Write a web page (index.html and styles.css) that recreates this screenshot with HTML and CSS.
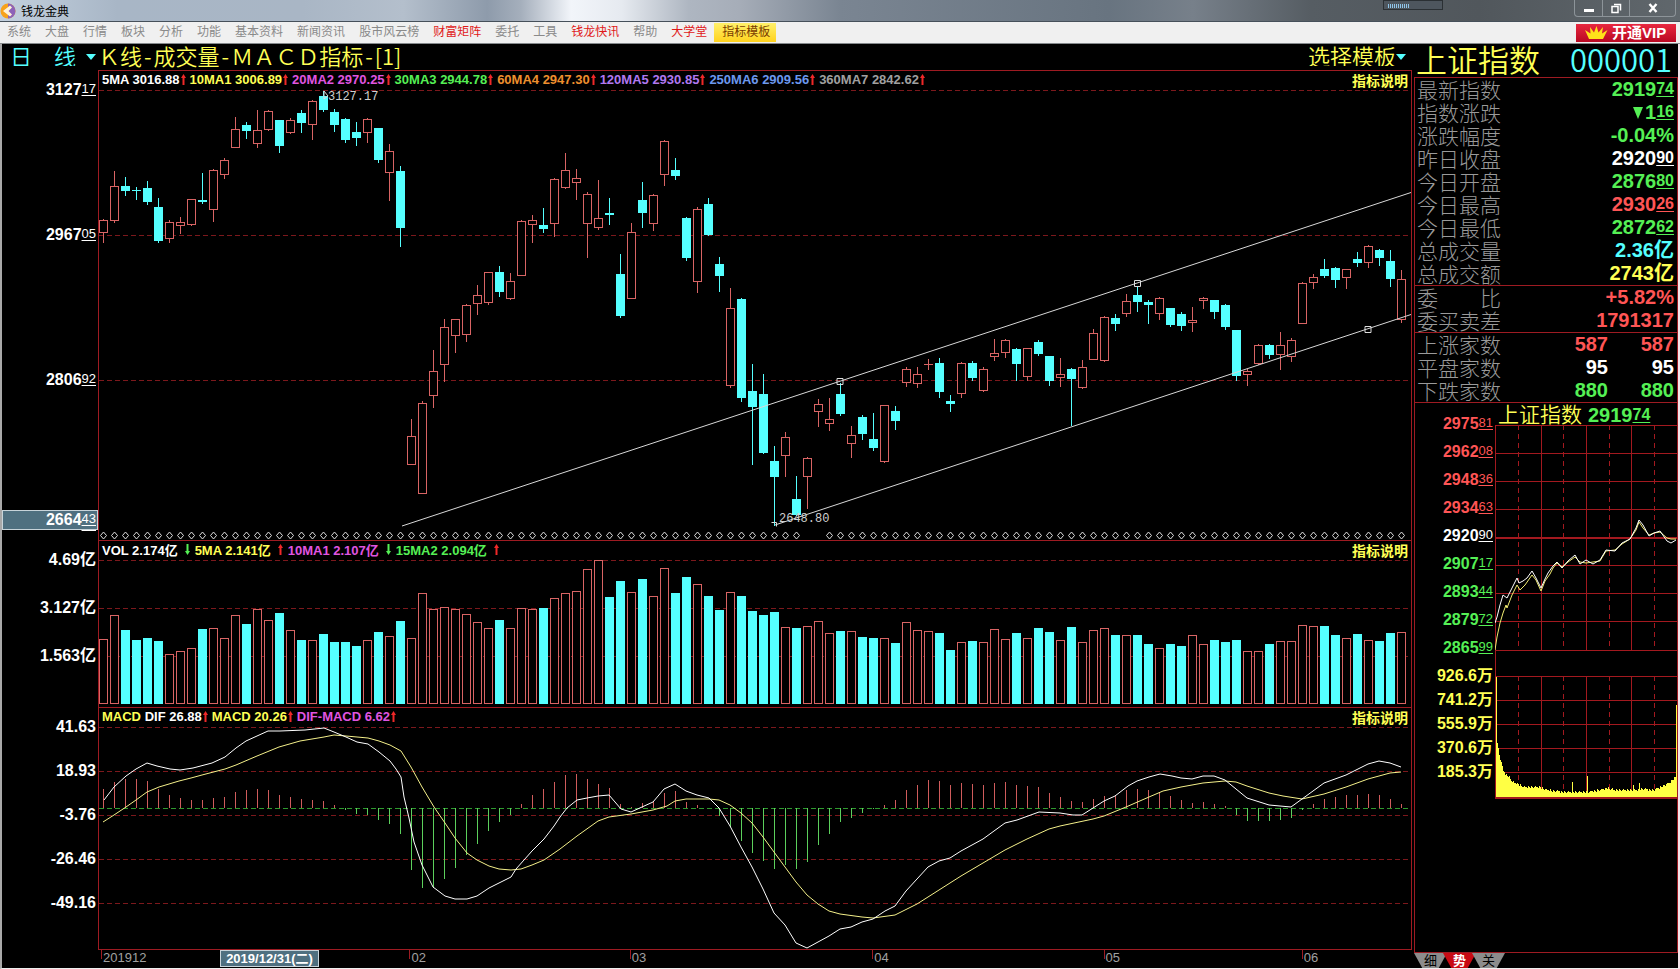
FILE: index.html
```html
<!DOCTYPE html>
<html lang="zh-CN">
	<head>
		<meta charset="utf-8">
		<title>钱龙金典</title>
		<link rel="stylesheet" href="styles.css">
	</head>
	<body>
		<svg class="defs" aria-hidden="true">
			<symbol id="arrow-up" viewBox="0 0 5 11">
				<path d="M2.5 0L5 4H3.5V11H1.5V4H0z" fill="currentColor"/>
			</symbol>
			<symbol id="arrow-down" viewBox="0 0 5 11">
				<path d="M2.5 11L5 7H3.5V0H1.5V7H0z" fill="currentColor"/>
			</symbol>
		</svg>

		<header class="titlebar">
			<svg class="app_icon" viewBox="0 0 16 16">
				<circle cx="8" cy="8" r="7.5" fill="#f7a21b"/>
				<path d="M8 .5a7.5 7.5 0 0 1 0 15z" fill="#8d62b8"/>
				<path d="M3 8L10 2.500L12 4.500L8.500 8L12 11.500L10 13.500z" fill="#fff3d8"/>
			</svg>
			<h1>钱龙金典</h1>
			<div class="gadget"><i></i></div>
			<div class="win_buttons">
				<button type="button" aria-label="最小化"><svg viewBox="0 0 12 12"><path d="M1 7h10v3H1z" fill="#fff"/></svg></button>
				<button type="button" aria-label="还原"><svg viewBox="0 0 12 12"><path d="M4 2.500h6.500v6M2 4.500h6v6H2z" fill="none" stroke="#fff" stroke-width="1.500"/></svg></button>
				<button type="button" class="close" aria-label="关闭"><svg viewBox="0 0 12 12"><path d="M2.500 2L9.500 10M9.500 2L2.500 10" stroke="#fff" stroke-width="2.400"/></svg></button>
			</div>
		</header>

		<nav class="menubar">
			<a href="#">系统</a>
			<a href="#">大盘</a>
			<a href="#">行情</a>
			<a href="#">板块</a>
			<a href="#">分析</a>
			<a href="#">功能</a>
			<a href="#">基本资料</a>
			<a href="#">新闻资讯</a>
			<a href="#">股市风云榜</a>
			<a href="#" class="hot">财富矩阵</a>
			<a href="#">委托</a>
			<a href="#">工具</a>
			<a href="#" class="hot">钱龙快讯</a>
			<a href="#">帮助</a>
			<a href="#" class="hot">大学堂</a>
			<a href="#" class="template">指标模板</a>
			<button type="button" class="vip">
				<svg viewBox="0 0 24 15"><path d="M5 14L1 5L6.500 8.500L6 2L10 7.500L12.500 1L14.500 7.500L19 2L18 8.500L23.500 5L19 14z" fill="#ffe21a"/></svg>
				开通VIP
			</button>
		</nav>

		<main class="workspace">
			<section class="charts">
				<div class="chart_title">
					<select class="period" aria-label="周期"><option>日　线</option></select>
					<svg class="caret" viewBox="0 0 10 6"><path d="M0 0h10L5 6z"/></svg>
					<h2>Ｋ线<i>-</i>成交量<i>-</i>ＭＡＣＤ指标<i>-</i>[1]</h2>
					<select class="tpl" aria-label="选择模板"><option>选择模板</option></select>
					<svg class="caret" viewBox="0 0 10 6"><path d="M0 0h10L5 6z"/></svg>
				</div>

				<div class="panel price">
					<ul class="axis">
						<li>3127<u>17</u></li>
						<li>2967<u>05</u></li>
						<li>2806<u>92</u></li>
						<li>2648<u>80</u></li>
					</ul>
					<div class="cursor_price">2664<u>43</u></div>
					<div class="plot">
						<div class="legend">
							<span class="white">5MA 3016.88</span><svg class="up"><use href="#arrow-up"/></svg>
							<span class="yellow">10MA1 3006.89</span><svg class="up"><use href="#arrow-up"/></svg>
							<span class="magenta">20MA2 2970.25</span><svg class="up"><use href="#arrow-up"/></svg>
							<span class="green">30MA3 2944.78</span><svg class="up"><use href="#arrow-up"/></svg>
							<span class="orange">60MA4 2947.30</span><svg class="up"><use href="#arrow-up"/></svg>
							<span class="purple">120MA5 2930.85</span><svg class="up"><use href="#arrow-up"/></svg>
							<span class="blue">250MA6 2909.56</span><svg class="up"><use href="#arrow-up"/></svg>
							<span class="gray">360MA7 2842.62</span><svg class="up"><use href="#arrow-up"/></svg>
							<a href="#">指标说明</a>
						</div>
						<svg id="price" viewBox="99 71 1312 469" preserveAspectRatio="none">
							<path class="grid" d="M99 90.500H1411M99 235.500H1411M99 380.500H1411"/>
							<g id="candles"></g>
							<path class="trend" d="M402 526L1411 192.500M775 525L1411 314.500"/>
							<path class="handle" d="M837 378.500h6v6h-6zM1134.500 280.500h6v6h-6zM1365 326.500h6v6h-6zM771.500 522.500h5v4M324 91v8l4-3z"/>
							<text x="328" y="100">3127.17</text>
							<text x="779" y="522">2648.80</text>
							<path id="diamonds" class="diamond"/>
						</svg>
					</div>
				</div>

				<div class="panel volume">
					<ul class="axis">
						<li>4.69亿</li>
						<li>3.127亿</li>
						<li>1.563亿</li>
					</ul>
					<div class="plot">
						<div class="legend wide">
							<span class="white">VOL 2.174亿</span><svg class="down"><use href="#arrow-down"/></svg>
							<span class="yellow">5MA 2.141亿</span><svg class="up"><use href="#arrow-up"/></svg>
							<span class="magenta">10MA1 2.107亿</span><svg class="down"><use href="#arrow-down"/></svg>
							<span class="green">15MA2 2.094亿</span><svg class="up"><use href="#arrow-up"/></svg>
							<a href="#">指标说明</a>
						</div>
						<svg viewBox="99 541 1312 166" preserveAspectRatio="none">
							<path class="grid" d="M99 560.500H1411M99 608.500H1411M99 656.500H1411"/>
							<g id="bars"></g>
						</svg>
					</div>
				</div>

				<div class="panel macd">
					<ul class="axis">
						<li>41.63</li>
						<li>18.93</li>
						<li>-3.76</li>
						<li>-26.46</li>
						<li>-49.16</li>
					</ul>
					<div class="plot">
						<div class="legend">
							<span class="yellow">MACD</span>&nbsp;<span class="white">DIF 26.88</span><svg class="up"><use href="#arrow-up"/></svg>
							<span class="yellow">MACD 20.26</span><svg class="up"><use href="#arrow-up"/></svg>
							<span class="magenta">DIF-MACD 6.62</span><svg class="up"><use href="#arrow-up"/></svg>
							<a href="#">指标说明</a>
						</div>
						<svg viewBox="99 708 1312 241" preserveAspectRatio="none">
							<path class="grid" d="M99 727.500H1411M99 771.500H1411M99 815.500H1411M99 859.500H1411M99 903.500H1411"/>
							<path class="zero" d="M99 808.500H1411"/>
							<path id="hist_up" class="hist_up"/>
							<path id="hist_down" class="hist_down"/>
							<polyline class="dea" points="103,822 114,815 126,807 136,800 147,792 159,787 179,781 191,778 202,775 225,769 236,765 257,756 279,747 300,741 324,737 334,735 346,736 357,737 368,738 379,741 390,745 401,751 411,767 422,787 434,807 445,823 455,838 467,853 477,860 489,866 499,869 511,870 521,869 532,865 544,860 560,849 577,836 598,821 609,817 631,814 653,810 667,806 675,801 686,799 709,799 719,800 730,805 741,813 752,823 763,837 774,852 796,882 807,895 818,904 829,911 840,914 862,917 873,918 895,915 917,904 939,890 961,876 983,863 1005,850 1027,839 1049,829 1060,826 1093,819 1104,816 1126,807 1149,797 1163,791 1181,787 1203,783 1225,781 1236,782 1247,786 1269,793 1283,796 1302,799 1324,794 1346,787 1368,779 1390,773 1401,772"/>
							<polyline class="dif" points="104,800 114,787 126,776 136,769 147,763 157,766 170,769 180,770 193,768 212,763 225,757 236,748 246,741 268,731 280,731 305,730 324,728 334,732 346,737 357,742 368,744 379,752 390,761 396,769 401,777 404,797 409,818 414,842 422,865 433,887 445,896 455,899 467,899 477,896 489,888 511,877 516,869 532,851 544,839 554,826 560,817 567,808 577,800 587,798 598,796 609,795 621,809 631,812 642,807 653,802 664,789 675,784 686,791 697,795 709,798 719,808 730,826 741,847 752,867 763,889 774,913 785,925 796,943 807,948 818,942 829,936 840,929 851,927 862,922 873,919 885,911 895,906 906,891 928,867 939,861 950,858 961,851 983,839 1005,823 1017,820 1039,812 1060,813 1073,815 1082,815 1093,808 1104,801 1115,796 1128,786 1137,781 1149,777 1160,774 1172,776 1181,778 1192,779 1203,776 1214,776 1225,780 1236,789 1247,798 1269,805 1291,807 1302,799 1324,783 1346,775 1368,764 1379,761 1390,763 1401,767"/>
						</svg>
					</div>
				</div>

				<div class="dates">
					<span>201912</span>
					<span>02</span>
					<span>03</span>
					<span>04</span>
					<span>05</span>
					<span>06</span>
					<b class="cursor_date">2019/12/31(二)</b>
				</div>
			</section>

			<aside class="quote">
				<h2><span class="name">上证指数</span><span class="code">000001</span></h2>
				<div class="quote_body">
					<table>
						<tr><th>最新指数</th><td class="green">2919<u>74</u></td></tr>
						<tr><th>指数涨跌</th><td class="green"><svg class="fall" viewBox="0 0 10 12"><path d="M0 0h10L5 12z"/></svg>1<u>16</u></td></tr>
						<tr><th>涨跌幅度</th><td class="green">-0.04%</td></tr>
						<tr><th>昨日收盘</th><td class="white">2920<u>90</u></td></tr>
						<tr><th>今日开盘</th><td class="green">2876<u>80</u></td></tr>
						<tr><th>今日最高</th><td class="red">2930<u>26</u></td></tr>
						<tr><th>今日最低</th><td class="green">2872<u>62</u></td></tr>
						<tr><th>总成交量</th><td class="cyan">2.36亿</td></tr>
						<tr><th>总成交额</th><td class="yellow">2743亿</td></tr>
					</table>
					<table>
						<tr><th>委　　比</th><td class="red">+5.82%</td></tr>
						<tr><th>委买卖差</th><td class="red">1791317</td></tr>
					</table>
					<table class="counts">
						<tr><th>上涨家数</th><td class="red">587</td><td class="red">587</td></tr>
						<tr><th>平盘家数</th><td class="white">95</td><td class="white">95</td></tr>
						<tr><th>下跌家数</th><td class="green">880</td><td class="green">880</td></tr>
					</table>
					<div class="trend_chart">
						<div class="mini_axis">
							<ul class="axis">
								<li class="red">2975<u>81</u></li>
								<li class="red">2962<u>08</u></li>
								<li class="red">2948<u>36</u></li>
								<li class="red">2934<u>63</u></li>
								<li class="white">2920<u>90</u></li>
								<li class="green">2907<u>17</u></li>
								<li class="green">2893<u>44</u></li>
								<li class="green">2879<u>72</u></li>
								<li class="green">2865<u>99</u></li>
							</ul>
							<ul class="axis yellow">
								<li>926.6万</li>
								<li>741.2万</li>
								<li>555.9万</li>
								<li>370.6万</li>
								<li>185.3万</li>
							</ul>
						</div>
						<h3>上证指数<b class="green">2919<u>74</u></b></h3>
						<svg viewBox="1495 425 182 374" preserveAspectRatio="none">
							<path class="line" d="M1495 425.500h182M1495 453.500h182M1495 481.500h182M1495 509.500h182M1495 565.500h182M1495 593.500h182M1495 621.500h182M1495 650.500h182M1541.500 425V650M1586.500 425V650M1631.500 425V650M1495.500 425V798"/>
							<path class="line mid" d="M1495 538h182"/>
							<path class="line" d="M1495 676.500h182M1495 700.500h182M1495 724.500h182M1495 748.500h182M1495 772.500h182M1541.500 676V798M1586.500 676V798M1631.500 676V798"/>
							<path class="line dash" d="M1518.500 425V650M1563.500 425V650M1609.500 425V650M1654.500 425V650M1518.500 676V798M1563.500 676V798M1609.500 676V798M1654.500 676V798"/>
							<path id="ticks" class="ticks"/>
							<path class="line mid" d="M1495 798h182"/>
							<polyline class="avg" points="1495,650 1497,637 1500,623 1503,613 1506,605 1507,608 1512,595 1517,585 1520,590 1525,585 1532,575 1536,580 1541,591 1545,581 1550,574 1553,568 1557,563 1562,567 1568,562 1575,557 1580,562 1586,563 1593,562 1600,561 1606,551 1615,550 1622,544 1630,539 1636,530 1639,522 1643,528 1649,535 1654,533 1660,532 1667,538 1671,539 1676,539"/>
							<polyline class="now" points="1495,623 1497,617 1500,605 1503,595 1507,598 1512,588 1517,578 1519,583 1523,581 1527,578 1532,571 1536,578 1541,588 1545,579 1548,573 1553,566 1557,562 1562,568 1568,561 1575,555 1580,564 1586,560 1593,564 1600,560 1606,550 1615,551 1622,543 1630,539 1636,528 1639,520 1643,525 1649,536 1654,533 1660,531 1667,541 1671,543 1676,540"/>
						</svg>
					</div>
				</div>
				<div class="tabs">
					<button type="button">细</button>
					<button type="button" class="on">势</button>
					<button type="button">关</button>
				</div>
			</aside>
		</main>
		<script src="chart.js"></script>
	</body>
</html>
```

FILE: styles.css
```css
*{
	margin:0;
	padding:0;
	box-sizing:border-box;
}

body{
	display:flex;
	flex-direction:column;
	min-height:100vh;
	background-color:#000;
	color:#FFF;
	font-family:"Liberation Sans", "Noto Sans CJK SC", sans-serif;
}

ul{
	list-style:none;
}

a{
	text-decoration:none;
	color:inherit;
}

button{
	border:0;
	background:none;
	font-family:inherit;
}

svg{
	display:block;
}

.defs{
	position:absolute;
	width:0;
	height:0;
}

.white{ color:#FFF; }
.yellow{ color:#FFFF55; }
.magenta{ color:#E055E0; }
.green{ color:#55F055; }
.orange{ color:#EE8F2E; }
.purple{ color:#B078F0; }
.blue{ color:#6C98EE; }
.gray{ color:#A0A0A0; }
.red{ color:#FF5555; }
.cyan{ color:#55FFFF; }

/* title bar */
.titlebar{
	display:flex;
	align-items:center;
	height:22px;
	border-bottom:1px solid #46505A;
	background:linear-gradient(90deg, #C3D0DE 0, #A8B6C6 7%, #A9B6C5 18%, #B4BFCC 24%, #8E9BAB 29%, #A5AFBC 31%, #F2F5FA 34%, #E6EAF0 37%, #AEB6C1 41%, #A6ADB8 44%, #7A8592 50%, #687480 66%, #77808A 71%, #565D63 78%, #51575C 88%, #60676C 100%);
}

.app_icon{
	width:16px;
	height:16px;
	flex:none;
}

.titlebar h1{
	flex:1;
	margin-left:5px;
	color:#000;
	font-size:12px;
	font-weight:normal;
}

.gadget{
	align-self:flex-start;
	width:60px;
	height:10px;
	margin-right:131px;
	padding:3px 4px;
	border:1px solid #2B3034;
	background-color:#4E565E;
}

.gadget i{
	display:block;
	width:21px;
	height:4px;
	background:repeating-linear-gradient(90deg, #8FC4E8 0, #8FC4E8 1px, #4E565E 1px, #4E565E 2px);
}

.win_buttons{
	display:flex;
	align-self:flex-start;
	margin-right:4px;
	border:1px solid #8D9499;
	border-top:0;
	border-radius:0 0 4px 4px;
}

.win_buttons button{
	display:flex;
	align-items:center;
	justify-content:center;
	width:27px;
	height:16px;
}

.win_buttons button + button{
	border-left:1px solid #8D9499;
}

.win_buttons .close{
	width:46px;
}

.win_buttons svg{
	width:12px;
	height:12px;
}

/* menu */
.menubar{
	display:flex;
	align-items:center;
	gap:14px;
	height:22px;
	padding:0 4px 0 7px;
	border-bottom:1px solid #85898C;
	background-color:#F0F0F0;
	color:#8A8A8A;
	font-size:12px;
	line-height:19px;
	white-space:nowrap;
}

.menubar .hot{
	color:#E01818;
}

.menubar .template{
	margin-left:-7px;
	padding:0 6px 0 8px;
	background:linear-gradient(#FFF06A, #FFD21E);
	color:#7A3C00;
}

.vip{
	display:flex;
	align-items:center;
	gap:4px;
	width:100px;
	height:18px;
	margin-left:auto;
	padding-left:8px;
	background:linear-gradient(#E8273F, #B90822);
	color:#FFF;
	font-size:15px;
	font-weight:bold;
	line-height:18px;
}

.vip svg{
	width:24px;
	height:15px;
}

/* workspace */
.workspace{
	display:flex;
	flex:1;
	gap:2px;
	border:2px solid #A9A9A9;
	border-width:0 2px 1px 2px;
	border-right-color:#F3E4EA;
	border-bottom-color:#EEE;
}

.charts{
	flex:1;
	min-width:0;
}

.chart_title{
	display:flex;
	align-items:center;
	height:26px;
	padding-bottom:4px;
	color:#FFFF55;
	font-family:"Noto Sans CJK SC", sans-serif;
	font-size:22px;
	line-height:22px;
	white-space:nowrap;
}

.chart_title h2{
	flex:1;
	margin-left:2px;
	font-size:22px;
	font-weight:350;
}

.chart_title i{
	padding:0 2px;
	font-style:normal;
}

.chart_title select{
	appearance:none;
	width:88px;
	height:22px;
	border:0;
	background:none;
	color:#FFFF55;
	font-family:inherit;
	font-size:22px;
	font-weight:350;
	line-height:22px;
}

.chart_title .period{
	width:76px;
	margin-left:8px;
	color:#55FFFF;
}

.caret{
	width:10px;
	height:6px;
	margin-top:4px;
	fill:#55FFFF;
}

.tpl + .caret{
	margin-right:6px;
}

.panel{
	display:grid;
	grid-template-columns:96px 1fr;
	position:relative;
}

.price{ height:470px; }
.volume{ height:167px; }
.macd{ height:242px; }

.axis{
	display:flex;
	flex-direction:column;
	padding:10px 2px 0 0;
	font-size:16px;
	font-weight:bold;
	line-height:20px;
	text-align:right;
}

.price .axis{ gap:125px; }
.volume .axis{ gap:28px; }
.macd .axis{ gap:24px; }

u{
	font-size:13px;
	font-weight:normal;
	vertical-align:2px;
	line-height:1;
	text-underline-offset:2px;
}

.cursor_price{
	position:absolute;
	top:440px;
	left:0;
	width:96px;
	height:20px;
	padding-right:1px;
	border:1px solid #C8D4DA;
	background-color:#4F7080;
	font-size:16px;
	font-weight:bold;
	line-height:18px;
	text-align:right;
}

.plot{
	display:grid;
	grid-template-rows:100%;
	grid-template-columns:100%;
	min-width:0;
	min-height:0;
	border:1px solid #9E1B22;
	border-bottom:0;
}

.plot > *{
	grid-area:1 / 1;
}

.plot > svg{
	width:100%;
	height:100%;
	overflow:hidden;
}

.legend{
	display:flex;
	align-items:center;
	align-self:start;
	height:17px;
	padding:0 3px;
	font-size:13px;
	font-weight:bold;
	white-space:nowrap;
	z-index:1;
}

.legend svg{
	width:5px;
	height:11px;
	margin:0 4px 0 1px;
}

.legend.wide svg{
	margin:0 5px 0 7px;
}

.up{ color:#F02828; }
.down{ color:#55F055; }

.legend a{
	margin-left:auto;
	color:#FFFF55;
	font-size:14px;
}

.plot path,
.plot polyline{
	fill:none;
	vector-effect:non-scaling-stroke;
}

.legend use{
	fill:currentColor;
}

.plot .grid{
	stroke:#7C181C;
	stroke-dasharray:5 3;
}

.plot .zero{
	stroke:#2E9A2E;
	stroke-dasharray:5 3;
}

.plot .trend{ stroke:#D8D8D8; }

.plot .handle,
.plot .diamond{
	stroke:#DDD;
}

.plot text{
	fill:#D0D0D0;
	font-family:"Liberation Mono", monospace;
	font-size:12px;
}

.plot .rise{
	fill:#000;
	stroke:#D96464;
}

.plot .wick_rise{ stroke:#D96464; }

.plot .drop{ fill:#55FFFF; }
.plot .wick_drop{ stroke:#55FFFF; }
.plot .hist_up{ stroke:#D05C5C; }
.plot .hist_down{ stroke:#5CD05C; }
.plot .dif{ stroke:#FFF; }
.plot .dea{ stroke:#F4F08A; }

.grid,
.zero,
#candles,
#bars,
.hist_up,
.hist_down{
	shape-rendering:crispEdges;
}

.dates{
	display:grid;
	grid-template-columns:308fr 220fr 242fr 231fr 198fr 110fr;
	position:relative;
	height:18px;
	margin-left:96px;
	padding-left:3px;
	border-top:1px solid #9E1B22;
	color:#A0A0A0;
	font-size:13px;
	line-height:16px;
}

.dates span{
	position:relative;
	padding-left:2px;
}

.dates span::before{
	content:"";
	position:absolute;
	left:0;
	top:0;
	height:9px;
	border-left:1px solid #9E1B22;
}

.cursor_date{
	position:absolute;
	left:122px;
	top:0;
	width:99px;
	border:1px solid #C8D4DA;
	background-color:#4F7080;
	color:#FFF;
	text-align:center;
	line-height:15px;
}

/* quote panel */
.quote{
	display:flex;
	flex-direction:column;
	flex:none;
	width:264px;
}

.quote h2{
	display:flex;
	justify-content:space-between;
	height:33px;
	padding:0 6px 0 2px;
	font-family:"Noto Sans CJK SC", sans-serif;
	font-size:31px;
	font-weight:350;
	line-height:30px;
}

.quote .name{ color:#FFFF55; }
.quote .code{ color:#55FFFF; }

.quote_body{
	flex:1;
	border:1px solid #9E1B22;
}

.quote table{
	width:100%;
	border-spacing:0;
	border-bottom:1px solid #9E1B22;
}

.quote th{
	height:23px;
	padding-left:2px;
	color:#9A9A9A;
	font-family:"Noto Sans CJK SC", sans-serif;
	font-size:21px;
	font-weight:300;
	line-height:23px;
	text-align:left;
	white-space:nowrap;
}

.quote td{
	padding-right:3px;
	font-size:20px;
	font-weight:bold;
	line-height:23px;
	text-align:right;
}

.quote td u,
.quote h3 u{
	font-size:16px;
	font-weight:bold;
}

.counts td{
	width:66px;
}

.counts th{
	width:130px;
}

.fall{
	display:inline-block;
	width:10px;
	height:12px;
	margin-right:2px;
	fill:currentColor;
}

.trend_chart{
	display:grid;
	grid-template-columns:80px 1fr;
	grid-template-rows:22px auto;
}

.mini_axis{
	grid-row:1 / 3;
	padding-top:11px;
}

.mini_axis .axis{
	gap:8px;
	padding-top:0;
}

.mini_axis .axis + .axis{
	gap:4px;
	margin-top:8px;
}

.trend_chart h3{
	padding-left:3px;
	color:#FFFF55;
	font-family:"Noto Sans CJK SC", sans-serif;
	font-size:21px;
	font-weight:350;
	line-height:20px;
	white-space:nowrap;
}

.trend_chart h3 b{
	margin-left:6px;
	font-family:"Liberation Sans", sans-serif;
	font-size:20px;
	font-weight:bold;
}

.trend_chart svg{
	width:100%;
	height:374px;
	fill:none;
}

.line{
	stroke:#A3191F;
	shape-rendering:crispEdges;
}

.mid{ stroke-width:2; }

.dash{ stroke-dasharray:5 4; }

.ticks{
	stroke:#FFFF44;
	shape-rendering:crispEdges;
}

.now{ stroke:#FFF; }
.avg{ stroke:#F0EC70; }

.tabs{
	display:flex;
	height:15px;
}

.tabs button{
	width:33px;
	height:15px;
	margin-right:-4px;
	background-color:#8C8C8C;
	color:#000;
	clip-path:polygon(0 0, 100% 0, 75% 100%, 25% 100%);
	font-size:13px;
	line-height:15px;
}

.tabs .on{
	background-color:#C80A14;
	color:#FFF;
	font-weight:bold;
}
```

FILE: chart.js
```js
// one row per trading day: direction (1 up, 0 down), high, body top, body bottom, low, volume top, macd bar end
var days = [
	[1,219,220,232,242,639,789],[1,171,186,220,222,615,782],[0,177,186,191,195,630,779],[0,187,190,191,199,640,779],
	[0,181,188,202,204,638,781],[0,198,207,241,242,641,789],[1,220,222,238,242,654,795],[1,217,222,225,233,651,798],
	[1,199,199,224,225,648,800],[0,173,200,202,203,629,800],[1,169,170,209,221,628,798],[1,158,160,174,178,638,797],
	[1,117,129,147,147,615,792],[0,122,125,131,138,624,790],[1,110,130,143,147,609,789],[1,110,111,129,130,620,790],
	[0,120,120,146,152,613,795],[1,118,120,132,133,630,797],[0,110,113,123,132,640,799],[1,100,101,124,139,640,800],
	[0,91,96,110,111,634,801],[0,109,112,125,131,642,805],[0,118,119,140,142,642,810],[0,122,132,138,145,646,814],
	[1,118,119,132,142,640,815],[0,128,128,160,162,632,820],[1,144,151,172,200,636,824],[0,166,171,228,246,621,834],
	[1,419,436,464,464,638,870],[1,401,403,493,493,593,888],[1,350,371,395,407,609,888],[1,319,327,364,381,607,879],
	[1,319,319,335,352,609,868],[1,304,305,334,341,614,855],[1,285,295,303,314,622,844],[1,272,272,302,304,628,831],
	[0,266,272,292,296,620,822],[1,273,281,298,299,628,815],[1,220,221,275,275,608,804],[1,215,220,224,242,609,795],
	[0,208,225,229,232,608,789],[1,178,179,223,236,598,782],[1,153,170,187,188,593,775],[1,169,178,182,199,591,774],
	[1,192,194,223,257,569,779],[1,180,218,227,229,560,784],[0,198,213,215,224,597,788],[0,254,274,316,317,581,804],
	[1,223,232,298,298,592,807],[0,182,200,213,227,579,803],[1,194,195,223,230,596,801],[1,140,141,174,185,568,793],
	[0,158,170,176,179,593,791],[0,217,218,258,260,577,802],[1,207,209,281,292,584,805],[0,198,204,235,235,596,808],
	[0,257,264,276,291,610,816],[1,288,308,385,387,592,827],[0,298,299,398,401,596,841],[0,364,391,407,464,611,853],
	[0,374,394,453,453,615,861],[0,446,461,477,525,612,869],[1,432,437,455,476,627,865],[0,476,499,515,515,628,869],
	[1,457,458,476,508,626,862],[1,399,404,411,426,621,845],[1,398,419,423,430,633,834],[0,383,394,414,415,631,822],
	[1,426,435,443,457,631,818],[0,415,417,434,439,637,813],[0,413,439,448,450,638,809],[1,405,405,461,462,638,805],
	[0,406,411,421,429,643,800],[1,367,369,382,386,622,790],[1,367,374,383,387,630,785],[1,359,364,364,369,631,780],
	[0,358,363,392,397,633,781],[0,395,401,404,411,650,785],[1,362,363,393,397,642,783],[0,361,363,378,380,641,784],
	[1,367,369,390,391,642,785],[1,339,353,356,360,629,783],[1,339,340,352,357,639,782],[0,348,349,364,380,633,785],
	[1,348,348,376,380,638,786],[0,340,342,354,355,628,787],[0,356,356,381,385,632,793],[1,358,374,377,386,640,797],
	[0,368,369,379,425,627,801],[1,360,367,387,388,642,802],[1,329,333,359,359,630,799],[1,316,317,360,361,628,796],
	[0,314,318,324,330,635,795],[1,294,301,313,316,635,790],[0,286,295,302,311,635,789],[0,300,302,305,323,644,790],
	[1,297,298,313,319,648,792],[0,308,308,325,326,644,796],[0,312,314,326,330,646,800],[1,307,320,322,331,635,803],
	[1,297,298,300,308,644,802],[0,300,300,312,318,640,804],[0,304,305,327,329,642,806],[0,330,330,376,380,640,815],
	[1,369,371,374,385,651,821],[1,344,345,363,364,651,821],[0,344,345,355,358,644,821],[1,332,345,354,369,641,820],
	[1,338,340,356,361,641,818],[1,282,283,323,323,625,810],[1,274,277,282,288,626,804],[0,259,269,276,277,626,799],
	[0,267,268,280,287,635,797],[1,269,269,277,288,638,795],[0,252,259,263,266,634,795],[1,245,246,262,267,640,794],
	[0,249,250,258,265,641,795],[0,250,261,279,286,633,799],[1,270,279,319,322,632,804]
];

var ZERO = 808, VOL_BASE = 704;

function rect(cls, x, y, w, h){
	return '<rect class="' + cls + '" x="' + x + '" y="' + y + '" width="' + w + '" height="' + h + '"/>';
}

function body(up, x, top, bottom){
	if (up){
		return rect('rise', x + 0.5, top + 0.5, 8, Math.max(bottom - top, 0.01));
	}
	return rect('drop', x, top, 9, Math.max(bottom - top, 1));
}

var candles = '', bars = '', diamonds = '', histUp = '', histDown = '';

days.forEach(function(d, i){
	var x = 99 + i * 11, c = x + 4.5;
	candles += '<path class="' + (d[0] ? 'wick_rise' : 'wick_drop') + '" d="M' + c + ' ' + d[1] + 'V' + (d[4] + 1) + '"/>';
	candles += body(d[0], x, d[2], d[3]);
	bars += body(d[0], x, d[5], d[0] ? VOL_BASE - 1 : VOL_BASE);

	// no marker on these two days
	if (i != 64 && i != 65){
		diamonds += 'M' + c + ' 532l3 3.5l-3 3.5l-3 -3.5z';
	}

	if (d[6] < ZERO){
		histUp += 'M' + c + ' ' + d[6] + 'V' + ZERO;
	} else {
		histDown += 'M' + c + ' ' + ZERO + 'V' + d[6];
	}
});

document.getElementById('candles').innerHTML = candles;
document.getElementById('bars').innerHTML = bars;
document.getElementById('diamonds').setAttribute('d', diamonds);
document.getElementById('hist_up').setAttribute('d', histUp);
document.getElementById('hist_down').setAttribute('d', histDown);

// intraday volume, key points with the minutes between filled in
var vol = [[1496,677],[1497,742],[1499,755],[1501,762],[1503,771],[1506,775],[1509,777],[1512,782],[1518,784],[1523,787],[1540,787],[1543,789],[1553,791],[1567,792],[1587,792],[1600,790],[1607,788],[1615,790],[1633,790],[1643,789],[1653,790],[1663,786],[1670,782],[1675,777]];
var spikes = {1572:782, 1587:776, 1633:785, 1639:783, 1676:705};
var jitter = [0, 1, -1, 0, 1, 0, -1, 0, 0, 1, -1];
var ticks = '', k = 0;

for (var x = 1496; x < 1677; x++){
	while (k < vol.length - 2 && x > vol[k + 1][0]){
		k++;
	}
	var a = vol[k], b = vol[k + 1];
	var y = a[1] + (b[1] - a[1]) * (x - a[0]) / (b[0] - a[0]);
	y = spikes[x] || Math.round(y) + jitter[x % 11];
	ticks += 'M' + (x + 0.5) + ' ' + y + 'V797';
}
document.getElementById('ticks').setAttribute('d', ticks);
```
